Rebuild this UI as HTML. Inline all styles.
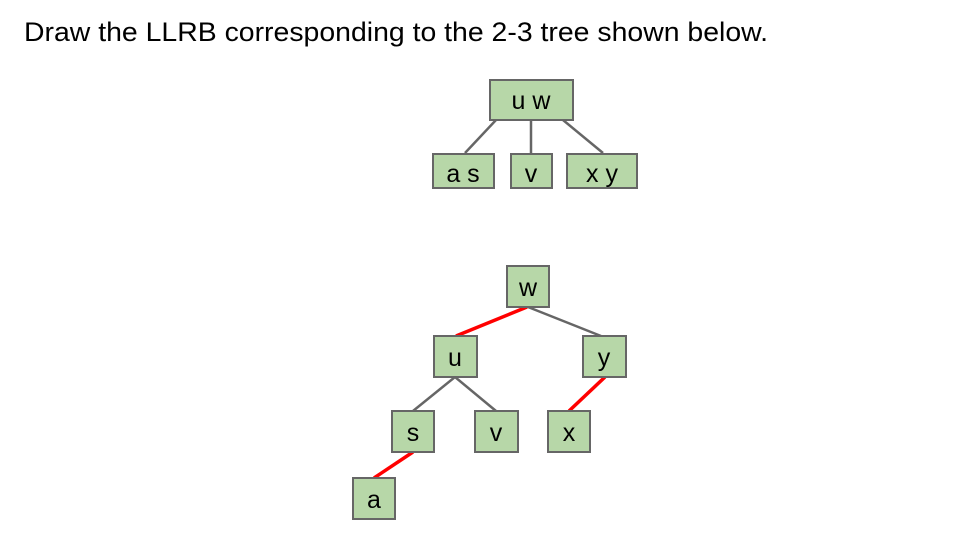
<!DOCTYPE html>
<html><head><meta charset="utf-8"><style>html,body{margin:0;padding:0;background:#fff;}</style></head>
<body>
<svg width="961" height="543" xmlns="http://www.w3.org/2000/svg" font-family="Liberation Sans, Arial, sans-serif">
<rect width="961" height="543" fill="#fff"/>
<text x="24" y="41" font-size="27" fill="#000" textLength="744" lengthAdjust="spacingAndGlyphs">Draw the LLRB corresponding to the 2-3 tree shown below.</text>
<g stroke="#666" stroke-width="2.5">
<line x1="496" y1="120" x2="465" y2="153"/>
<line x1="531" y1="120" x2="531" y2="153"/>
<line x1="563" y1="120" x2="603" y2="153"/>
<line x1="528" y1="307" x2="601" y2="336"/>
<line x1="455" y1="377" x2="413" y2="411"/>
<line x1="455" y1="377" x2="496" y2="411"/>
</g>
<g stroke="#f00" stroke-width="3.5">
<line x1="527" y1="307" x2="456" y2="336"/>
<line x1="605" y1="377" x2="569" y2="411"/>
<line x1="413" y1="452" x2="374" y2="478"/>
</g>
<g fill="#b7d7a8" stroke="#666" stroke-width="2">
<rect x="490" y="80" width="83" height="40"/>
<rect x="433" y="154" width="61" height="34"/>
<rect x="511" y="154" width="41" height="34"/>
<rect x="567" y="154" width="70" height="34"/>
<rect x="507" y="266" width="42" height="41"/>
<rect x="434" y="336" width="43" height="41"/>
<rect x="583" y="336" width="43" height="41"/>
<rect x="392" y="411" width="42" height="41"/>
<rect x="475" y="411" width="43" height="41"/>
<rect x="548" y="411" width="42" height="41"/>
<rect x="353" y="478" width="42" height="41"/>
</g>
<g font-size="25" text-anchor="middle" fill="#000">
<text x="531" y="109">u w</text>
<text x="463" y="182">a s</text>
<text x="531" y="182">v</text>
<text x="602" y="182">x y</text>
<text x="528" y="296">w</text>
<text x="455" y="366">u</text>
<text x="604" y="366">y</text>
<text x="413" y="441">s</text>
<text x="496" y="441">v</text>
<text x="569" y="441">x</text>
<text x="374" y="508">a</text>
</g>
</svg>
</body></html>
